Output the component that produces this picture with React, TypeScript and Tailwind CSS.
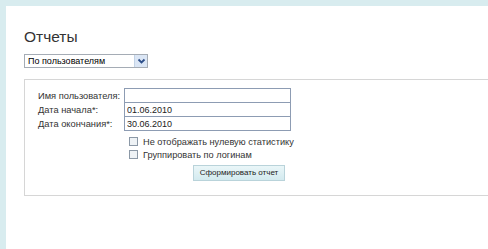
import React from 'react';

const ChevronDown = () => (
  <svg width="9" height="7" viewBox="0 0 9 7" fill="none">
    <path d="M1.5 1.5 L4.5 4.5 L7.5 1.5" stroke="#2d4f8a" strokeWidth="1.8" />
  </svg>
);

const font = '"Liberation Sans", Arial, sans-serif';

export default function App() {
  const inputCls =
    'h-[15px] w-[167px] border border-[#8d9cb3] bg-white px-[2px] text-[9px] leading-[13px] text-[#222] outline-none';

  return (
    <div
      className="h-[249px] w-[488px] overflow-hidden bg-[#d8ecef] pl-[6px] pt-[6px]"
      style={{ fontFamily: font }}
    >
      <div className="h-full w-full overflow-hidden bg-white pl-[18px] pt-[21px]">
        <h1 className="text-[15.5px] leading-[20px] text-[#333]">Отчеты</h1>

        <div className="mt-[7px] flex h-[14px] w-[124px] items-center border border-[#a5acb5] bg-white">
          <span className="flex-1 whitespace-nowrap pl-[3px] text-[9px] leading-[12px] text-black">
            По пользователям
          </span>
          <span className="flex h-[12px] w-[13px] items-center justify-center border-l border-[#c3d3e6] bg-[#dbe6f5]">
            <ChevronDown />
          </span>
        </div>

        <div className="mt-[11px] w-[600px] border border-[#d6d6d6] bg-white pb-[14px] pl-[13px] pt-[8px]">
          <div className="flex">
            <div className="w-[86px] whitespace-nowrap text-[9.3px] text-[#333]">
              <div className="h-[15px] pt-[2px] leading-[13px]">Имя пользователя:</div>
              <div className="h-[14px] pt-[1px] leading-[13px]">Дата начала*:</div>
              <div className="h-[14px] pt-[1px] leading-[13px]">Дата окончания*:</div>
            </div>
            <div className="flex flex-col">
              <input className={inputCls} style={{ fontFamily: font }} defaultValue="" />
              <input className={inputCls + ' -mt-px'} style={{ fontFamily: font }} defaultValue="01.06.2010" />
              <input className={inputCls + ' -mt-px'} style={{ fontFamily: font }} defaultValue="30.06.2010" />
            </div>
          </div>

          <div className="ml-[91px] mt-[6px] flex flex-col gap-[4px] whitespace-nowrap text-[9.2px] text-[#333]">
            <label className="flex h-[9px] items-center gap-[5px] leading-[12px]">
              <span className="h-[9px] w-[9px] border border-[#8b98a6] bg-[#eef2f5]" />
              Не отображать нулевую статистику
            </label>
            <label className="flex h-[9px] items-center gap-[5px] leading-[12px]">
              <span className="h-[9px] w-[9px] border border-[#8b98a6] bg-[#eef2f5]" />
              Группировать по логинам
            </label>
          </div>

          <div className="ml-[155px] mt-[6px] flex">
            <button
              className="h-[16px] w-[92px] whitespace-nowrap border border-[#b9d3da] bg-gradient-to-b from-[#eaf6f8] to-[#d3eaef] text-[8px] leading-[14px] text-[#222]"
              style={{ fontFamily: font }}
            >
              Сформировать отчет
            </button>
          </div>
        </div>
      </div>
    </div>
  );
}
